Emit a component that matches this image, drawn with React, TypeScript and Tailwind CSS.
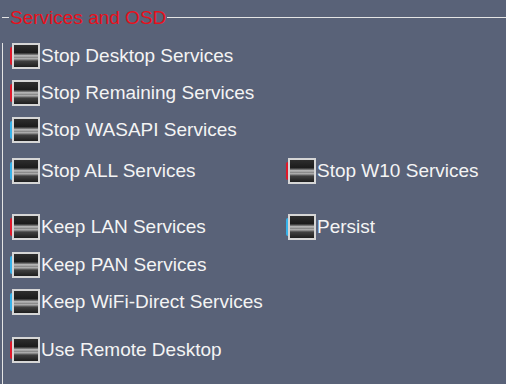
const rows: { gap: number; left: Item; right?: Item }[] = [
  { gap: 26, left: { label: 'Stop Desktop Services', tone: 'red' } },
  { gap: 11, left: { label: 'Stop Remaining Services', tone: 'red' } },
  { gap: 11, left: { label: 'Stop WASAPI Services', tone: 'blue' } },
  { gap: 15, left: { label: 'Stop ALL Services', tone: 'blue' }, right: { label: 'Stop W10 Services', tone: 'red' } },
  { gap: 30, left: { label: 'Keep LAN Services', tone: 'red' }, right: { label: 'Persist', tone: 'blue' } },
  { gap: 12, left: { label: 'Keep PAN Services', tone: 'blue' } },
  { gap: 11, left: { label: 'Keep WiFi-Direct Services', tone: 'blue' } },
  { gap: 22, left: { label: 'Use Remote Desktop', tone: 'red' } },
];

type Item = { label: string; tone: 'red' | 'blue' };

function Toggle({ label, tone }: Item) {
  return (
    <div className="flex items-center">
      <div className={`w-[2px] h-[18px] rounded-l-[2px] ${tone === 'red' ? 'bg-[#e0182a]' : 'bg-[#36b2ea]'}`} />
      <div className="w-[28px] h-[26px] border-2 border-[#d6d6d6] bg-[linear-gradient(to_bottom,#2e2e2e_0%,#1c1c1c_34%,#555555_41%,#c4c4c4_49%,#858585_56%,#b0b0b0_62%,#404040_73%,#1e1e1e_100%)]" />
      <span className="ml-[1px] text-[19px] leading-[22px] text-[#f4f4f4] whitespace-nowrap">{label}</span>
    </div>
  );
}

export default function App() {
  return (
    <div className="w-[506px] h-[384px] overflow-hidden bg-[#596278] pt-[7px] pl-[2px] font-['Liberation_Sans',Arial,sans-serif]">
      {/* group header */}
      <div className="flex items-center h-[21px]">
        <div className="w-[7px] h-px bg-[#e4e4e4]" />
        <span className="px-[1px] text-[19px] leading-[21px] text-[#e8101c] whitespace-nowrap">Services and OSD</span>
        <div className="flex-1 h-px bg-[#e4e4e4]" />
      </div>

      <div className="-mt-[11px] h-[400px] border-l border-[#e4e4e4] pl-[7px]">
        {rows.map((r) => (
          <div key={r.left.label} className="flex items-center h-[26px]" style={{ marginTop: r.gap }}>
            <div className="w-[276px]">
              <Toggle {...r.left} />
            </div>
            {r.right && <Toggle {...r.right} />}
          </div>
        ))}
      </div>
    </div>
  );
}
